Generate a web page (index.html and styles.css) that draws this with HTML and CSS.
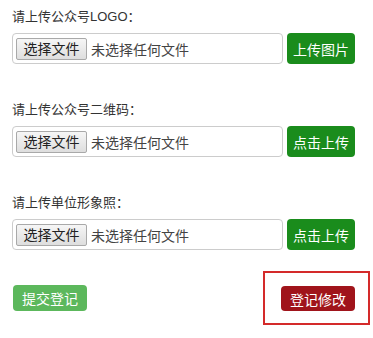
FILE: index.html
```html
<!DOCTYPE html>
<html lang="zh-CN">
  <head>
    <meta charset="UTF-8" />
    <meta name="viewport" content="width=device-width, initial-scale=1.0" />
    <title>上传资料</title>
    <link rel="stylesheet" href="styles.css">
  </head>
  <body>
    <!-- LOGO upload -->
    <div class="group">
      <div class="label">请上传公众号LOGO：</div>
      <div class="row">
        <div class="file-box">
          <span class="file-btn">选择文件</span>
          <span class="file-name">未选择任何文件</span>
        </div>
        <button class="btn btn-upload">上传图片</button>
      </div>
    </div>

    <!-- QR code upload -->
    <div class="group">
      <div class="label">请上传公众号二维码：</div>
      <div class="row">
        <div class="file-box">
          <span class="file-btn">选择文件</span>
          <span class="file-name">未选择任何文件</span>
        </div>
        <button class="btn btn-upload">点击上传</button>
      </div>
    </div>

    <!-- Unit photo upload -->
    <div class="group group-last">
      <div class="label">请上传单位形象照：</div>
      <div class="row">
        <div class="file-box">
          <span class="file-btn">选择文件</span>
          <span class="file-name">未选择任何文件</span>
        </div>
        <button class="btn btn-upload">点击上传</button>
      </div>
    </div>

    <!-- Actions -->
    <div class="actions">
      <button class="btn btn-submit">提交登记</button>
      <div class="highlight">
        <button class="btn btn-edit">登记修改</button>
      </div>
    </div>
  </body>
</html>
```

FILE: styles.css
```css
/* General styles */
body {
    margin: 0;
    padding: 7px 12px 0 12px;
    background: #fff;
    color: #333;
    font-family: "Liberation Sans", "Noto Sans CJK SC", sans-serif;
    font-size: 13px;
}

/* Upload groups */
.group {
    margin-bottom: 36px;
}

.group-last {
    margin-bottom: 21px;
}

.label {
    height: 20px;
    line-height: 20px;
    margin-bottom: 6px;
    color: #333;
}

.row {
    display: flex;
    gap: 4px;
}

/* Fake file input */
.file-box {
    box-sizing: border-box;
    width: 271px;
    height: 31px;
    border: 1px solid #ccc;
    border-radius: 4px;
    display: flex;
    align-items: center;
    padding-left: 3px;
    font-size: 14px;
}

.file-btn {
    box-sizing: border-box;
    height: 22px;
    width: 71px;
    line-height: 20px;
    text-align: center;
    border: 1px solid #a9a9a9;
    border-radius: 2px;
    background: linear-gradient(#f6f6f6, #dedede);
    color: #222;
}

.file-name {
    margin-left: 4px;
    color: #444;
}

/* Buttons */
.btn {
    border: none;
    border-radius: 4px;
    color: #fff;
    font-family: inherit;
    font-size: 14px;
    padding: 0;
    cursor: pointer;
}

.btn-upload {
    width: 68px;
    height: 31px;
    background: #1a8c1c;
}

.actions {
    display: flex;
    justify-content: space-between;
    align-items: center;
    padding-left: 1px;
    margin-right: -9px;
}

.btn-submit {
    width: 74px;
    height: 26px;
    background: #5cb85c;
}

.highlight {
    border: 2px solid #d42a2a;
    padding: 13px 13px 12px 16px;
}

.btn-edit {
    width: 74px;
    height: 25px;
    background: #a0141b;
}
```
